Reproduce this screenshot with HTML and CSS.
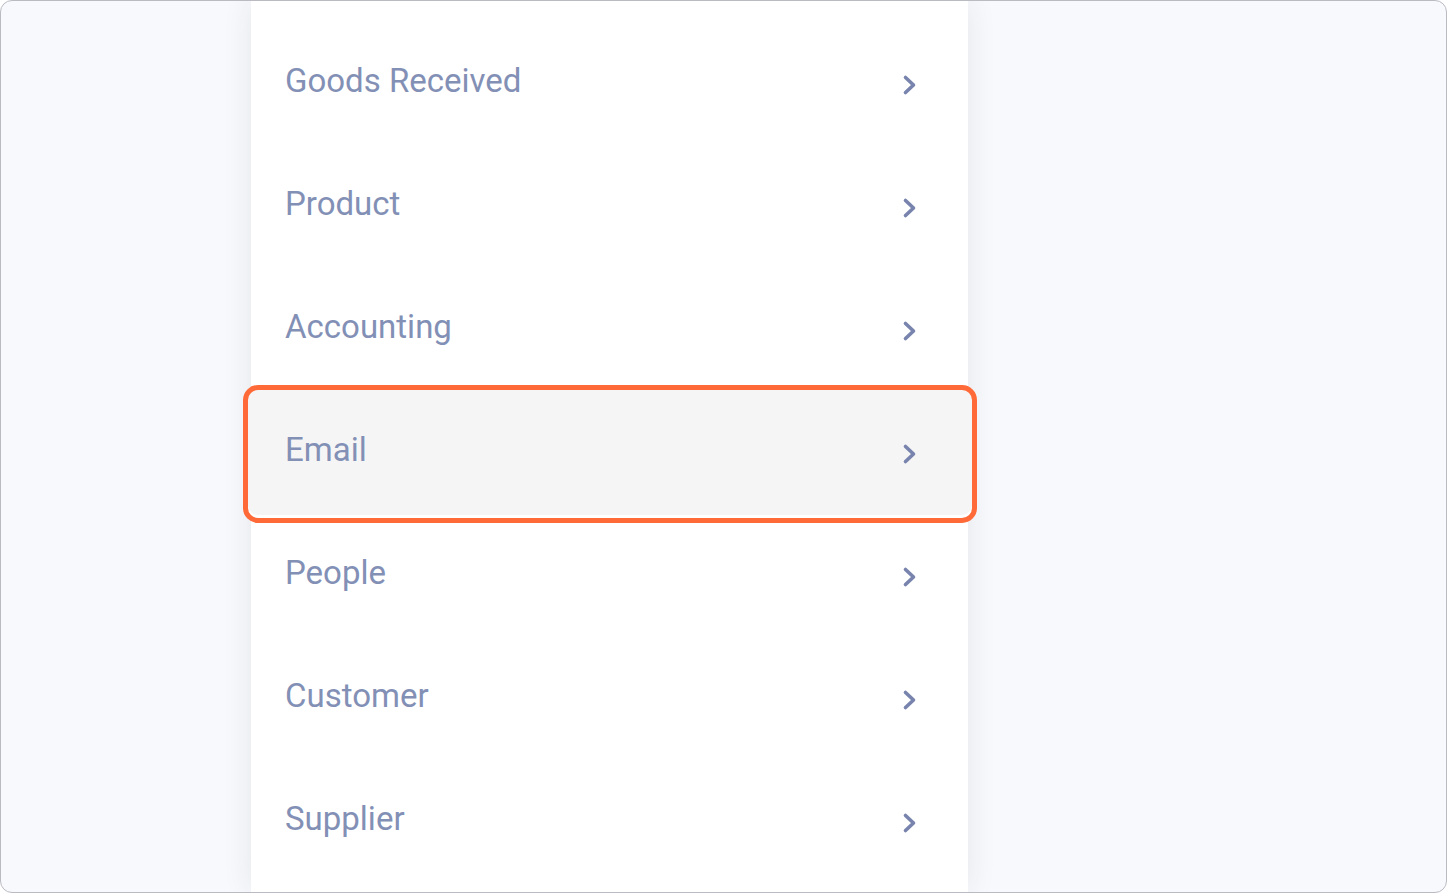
FILE: index.html
```html
<!DOCTYPE html>
<html>
<head>
<meta charset="utf-8">
<link rel="stylesheet" href="styles.css">
</head>
<body>
<div class="frame">
  <div class="panel">
    <ul class="menu">
      <li class="item"><span class="label">Goods Received</span><svg class="chev" viewBox="0 0 18 24"><path d="M4.5 4.5 L12.5 12 L4.5 19.5"/></svg></li>
      <li class="item"><span class="label">Product</span><svg class="chev" viewBox="0 0 18 24"><path d="M4.5 4.5 L12.5 12 L4.5 19.5"/></svg></li>
      <li class="item"><span class="label">Accounting</span><svg class="chev" viewBox="0 0 18 24"><path d="M4.5 4.5 L12.5 12 L4.5 19.5"/></svg></li>
      <li class="item item-active"><span class="label">Email</span><svg class="chev" viewBox="0 0 18 24"><path d="M4.5 4.5 L12.5 12 L4.5 19.5"/></svg></li>
      <li class="item"><span class="label">People</span><svg class="chev" viewBox="0 0 18 24"><path d="M4.5 4.5 L12.5 12 L4.5 19.5"/></svg></li>
      <li class="item"><span class="label">Customer</span><svg class="chev" viewBox="0 0 18 24"><path d="M4.5 4.5 L12.5 12 L4.5 19.5"/></svg></li>
      <li class="item"><span class="label">Supplier</span><svg class="chev" viewBox="0 0 18 24"><path d="M4.5 4.5 L12.5 12 L4.5 19.5"/></svg></li>
    </ul>
  </div>
</div>
</body>
</html>
```

FILE: styles.css
```css
html, body {
  margin: 0;
  padding: 0;
  background: #ffffff;
}
.frame {
  box-sizing: border-box;
  width: 1447px;
  height: 893px;
  border: 1px solid #babac2;
  border-radius: 12px;
  background: #f8f9fc;
  overflow: hidden;
  padding-left: 250px;
}
.panel {
  width: 717px;
  height: 100%;
  background: #ffffff;
  box-shadow: 0 0 28px rgba(40, 45, 70, 0.09);
  padding-top: 22px;
  box-sizing: border-box;
}
.menu {
  list-style: none;
  margin: 0;
  padding: 0;
}
.item {
  position: relative;
  z-index: 0;
  height: 123px;
  display: flex;
  align-items: center;
  justify-content: space-between;
  padding: 0 49px 0 34px;
  font-family: Roboto, "Liberation Sans", sans-serif;
  font-size: 33px;
  color: #8390b6;
}
.label {
  line-height: 1;
  margin-bottom: 8px;
}
.chev {
  width: 18px;
  height: 24px;
  fill: none;
  stroke: #7884ad;
  stroke-width: 3.6;
  stroke-linecap: round;
  stroke-linejoin: round;
}
.item-active::before {
  content: "";
  position: absolute;
  left: -8px;
  right: -9px;
  top: -7px;
  bottom: -8px;
  border: 5px solid #ff6a38;
  border-radius: 15px;
  background: #f5f5f5;
  box-shadow: inset 0 -3px 0 #ffffff;
  z-index: -1;
}
```
